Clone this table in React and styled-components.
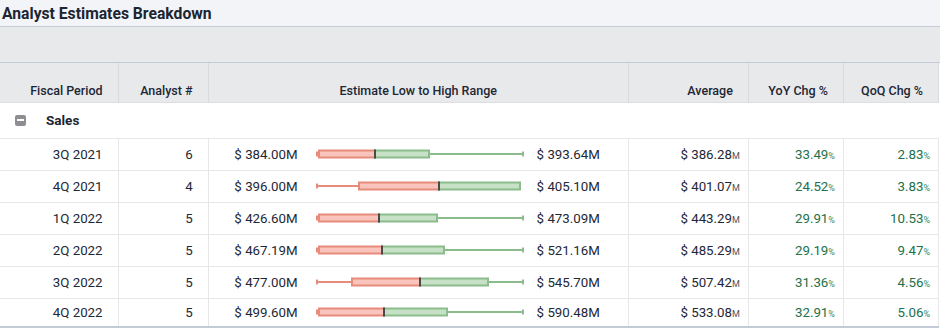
import React from 'react'
import styled, { createGlobalStyle } from 'styled-components'

const GlobalStyle = createGlobalStyle`
  body {
    margin: 0;
    background: #ffffff;
    font-family: Roboto, "Liberation Sans", Arial, sans-serif;
    color: #1d2735;
  }
`

const Wrapper = styled.section`
  width: 940px;
  height: 329px;
  overflow: hidden;
`
const TitleBar = styled.header`
  height: 26px;
  background: #f2f4f7;
  border-bottom: 1px solid #c3cbd6;
  display: flex;
  align-items: center;
  padding-left: 2px;
`
const Title = styled.h3`
  margin: 0;
  font-size: 15.7px;
  font-weight: 700;
  color: #1c2532;
`
const Band = styled.div`
  height: 35px;
  background: #e8e9eb;
  border-bottom: 1px solid #c3cbd6;
`
const Table = styled.table`
  border-collapse: collapse;
  table-layout: fixed;
  width: 939px;
  font-size: 13.3px;
`
const HeadRow = styled.tr`
  height: 39px;
`
const HeadCell = styled.th`
  padding: 0 ${p => (p.$align === 'center' ? 0 : 15)}px 4px 0;
  vertical-align: bottom;
  text-align: ${p => p.$align || 'right'};
  font-size: 12.5px;
  font-weight: 500;
  color: #1d2735;
  background: #e8e9eb;
  border-right: 1px solid #d7dade;
  border-bottom: 1px solid #dcdee2;
`
const GroupRow = styled.tr`
  height: 36px;
  border-bottom: 1px solid #e6e7e9;
`
const GroupCell = styled.td`
  padding: 0 0 0 15px;
`
const GroupLabel = styled.div`
  display: flex;
  align-items: center;
  gap: 20px;
  font-weight: 700;
  font-size: 13.5px;
  color: #1c2532;
`
const Toggle = styled.span`
  width: 11px;
  height: 11px;
  border-radius: 2px;
  background: #8c8e91;
  display: flex;
  align-items: center;
  justify-content: center;
  &::after {
    content: '';
    width: 7px;
    height: 2px;
    background: #ffffff;
  }
`
const Row = styled.tr`
  height: ${p => (p.$last ? '29px' : '32px')};
  border-bottom: ${p => (p.$last ? '2px solid #c3cbd6' : '1px solid #e6e7e9')};
`
const Cell = styled.td`
  padding: 0 ${p => p.$pad || 8}px 0 0;
  text-align: right;
  border-right: 1px solid #e6e7e9;
  color: ${p => (p.$green ? '#22714a' : '#1d2735')};
  white-space: nowrap;
`
const RangeCell = styled.td`
  padding: 0;
  border-right: 1px solid #e6e7e9;
`
const RangeLayout = styled.div`
  display: flex;
  align-items: center;
`
const LowValue = styled.span`
  width: 89px;
  text-align: right;
  margin-right: 18px;
`
const HighValue = styled.span`
  margin-left: 13px;
`
const Unit = styled.small`
  font-size: 9px;
  color: ${p => (p.$green ? '#3c8a62' : '#4b5563')};
`

const rows = [
  { period: '3Q 2021', n: 6, low: '384.00', high: '393.64', avg: '386.28', yoy: '33.49', qoq: '2.83', box: [0, 2, 59, 114, 207] },
  { period: '4Q 2021', n: 4, low: '396.00', high: '405.10', avg: '401.07', yoy: '24.52', qoq: '3.83', box: [0, 42, 123, 205, 205] },
  { period: '1Q 2022', n: 5, low: '426.60', high: '473.09', avg: '443.29', yoy: '29.91', qoq: '10.53', box: [0, 2, 63, 122, 207] },
  { period: '2Q 2022', n: 5, low: '467.19', high: '521.16', avg: '485.29', yoy: '29.19', qoq: '9.47', box: [0, 2, 66, 129, 207] },
  { period: '3Q 2022', n: 5, low: '477.00', high: '545.70', avg: '507.42', yoy: '31.36', qoq: '4.56', box: [0, 35, 104, 173, 207] },
  { period: '4Q 2022', n: 5, low: '499.60', high: '590.48', avg: '533.08', yoy: '32.91', qoq: '5.06', box: [0, 2, 68, 132, 207] },
]

const BoxPlot = ({ box }) => {
  const [min, q1, med, q3, max] = box
  const y = 7
  return (
    <svg width="208" height="14" viewBox="0 0 208 14">
      {q1 - min > 3 && <line x1={min + 1} y1={y} x2={q1} y2={y} stroke="#e78c7c" strokeWidth="2" />}
      <rect x={min} y={y - 2.5} width="2" height="5" fill="#e78c7c" />
      {max - q3 > 3 && <line x1={q3} y1={y} x2={max} y2={y} stroke="#8bbd8c" strokeWidth="2" />}
      {max - q3 > 3 && <rect x={max - 1} y={y - 2.5} width="2" height="5" fill="#8bbd8c" />}
      <rect x={q1 + 1} y={y - 3.5} width={med - q1 - 1} height="7" fill="#f8c4bb" stroke="#e78c7c" strokeWidth="2" />
      <rect x={med} y={y - 3.5} width={q3 - med - 1} height="7" fill="#c6e1c6" stroke="#8bbd8c" strokeWidth="2" />
      <line x1={med} y1={y - 4.5} x2={med} y2={y + 4.5} stroke="#4a4a4a" strokeWidth="2" />
    </svg>
  )
}

export default function App() {
  return (
    <Wrapper>
      <GlobalStyle />
      <TitleBar>
        <Title>Analyst Estimates Breakdown</Title>
      </TitleBar>
      <Band />
      <Table>
        <colgroup>
          <col style={{ width: 118 }} />
          <col style={{ width: 90 }} />
          <col style={{ width: 420 }} />
          <col style={{ width: 120 }} />
          <col style={{ width: 95 }} />
          <col style={{ width: 95 }} />
        </colgroup>
        <thead>
          <HeadRow>
            <HeadCell>Fiscal Period</HeadCell>
            <HeadCell>Analyst #</HeadCell>
            <HeadCell $align="center">Estimate Low to High Range</HeadCell>
            <HeadCell>Average</HeadCell>
            <HeadCell>YoY Chg %</HeadCell>
            <HeadCell>QoQ Chg %</HeadCell>
          </HeadRow>
        </thead>
        <tbody>
          <GroupRow>
            <GroupCell colSpan={6}>
              <GroupLabel><Toggle />Sales</GroupLabel>
            </GroupCell>
          </GroupRow>
          {rows.map((r, i) => (
            <Row key={r.period} $last={i === rows.length - 1}>
              <Cell $pad={15}>{r.period}</Cell>
              <Cell $pad={15}>{r.n}</Cell>
              <RangeCell>
                <RangeLayout>
                  <LowValue>$ {r.low}M</LowValue>
                  <BoxPlot box={r.box} />
                  <HighValue>$ {r.high}M</HighValue>
                </RangeLayout>
              </RangeCell>
              <Cell>$ {r.avg}<Unit>M</Unit></Cell>
              <Cell $green>{r.yoy}<Unit $green>%</Unit></Cell>
              <Cell $green>{r.qoq}<Unit $green>%</Unit></Cell>
            </Row>
          ))}
        </tbody>
      </Table>
    </Wrapper>
  )
}
